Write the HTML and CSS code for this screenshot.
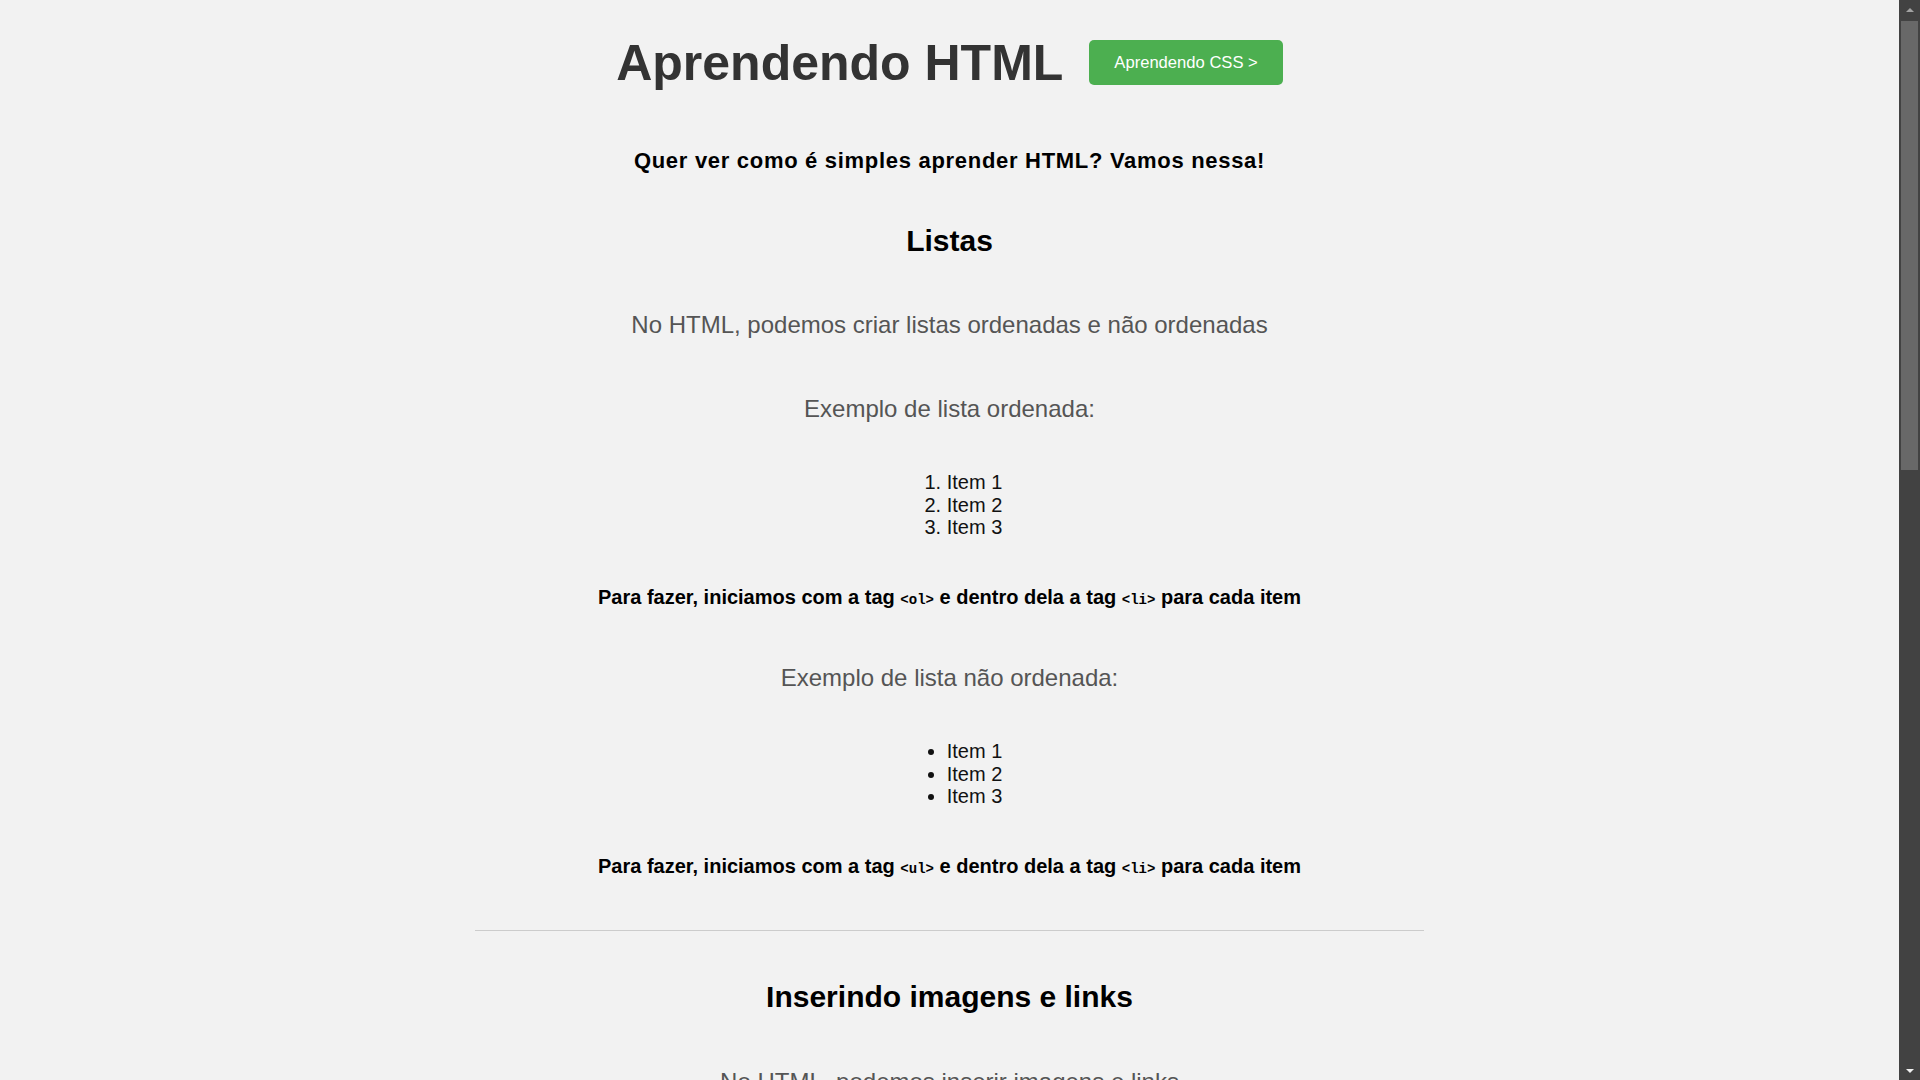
FILE: index.html
```html
<!DOCTYPE html>
<html lang="pt-BR">
<head>
<meta charset="utf-8">
<title>Aprendendo HTML</title>
<link rel="stylesheet" href="styles.css">
</head>
<body>
<header class="header">
  <h1 class="title">Aprendendo HTML</h1>
  <a class="btn" href="#">Aprendendo CSS &gt;</a>
</header>

<h3 class="subtitle">Quer ver como é simples aprender HTML? Vamos nessa!</h3>

<section class="section">
  <h2 class="section-title">Listas</h2>
  <p class="lead">No HTML, podemos criar listas ordenadas e não ordenadas</p>
  <p class="example">Exemplo de lista ordenada:</p>
  <ol class="list">
    <li>Item 1</li>
    <li>Item 2</li>
    <li>Item 3</li>
  </ol>
  <p class="note">Para fazer, iniciamos com a tag <code>&lt;ol&gt;</code> e dentro dela a tag <code>&lt;li&gt;</code> para cada item</p>
  <p class="example example-tight">Exemplo de lista não ordenada:</p>
  <ul class="list">
    <li>Item 1</li>
    <li>Item 2</li>
    <li>Item 3</li>
  </ul>
  <p class="note">Para fazer, iniciamos com a tag <code>&lt;ul&gt;</code> e dentro dela a tag <code>&lt;li&gt;</code> para cada item</p>
</section>

<hr class="divider">

<section class="section">
  <h2 class="section-title section-title-next">Inserindo imagens e links</h2>
  <p class="lead">No HTML, podemos inserir imagens e links</p>
  <p class="example">Exemplo de imagem:</p>
  <div class="figure">
    <svg width="180" height="200" viewBox="0 0 180 200" aria-label="HTML5">
      <polygon points="10,0 170,0 155,176 90,196 25,176" fill="#e44d26"/>
      <polygon points="90,14 156,14 143,164 90,180" fill="#f16529"/>
      <polygon points="46,40 134,40 131,62 70,62 72,86 129,86 122,150 90,160 58,150 56,122 78,122 79,134 90,138 101,134 103,110 50,110" fill="#fff"/>
    </svg>
  </div>
  <p class="note">Para inserir uma imagem, usamos a tag <code>&lt;img&gt;</code> com o atributo <code>src</code></p>
  <p class="example">Exemplo de link:</p>
  <p class="link-row"><a class="link" href="#">Clique aqui para aprender mais sobre HTML</a></p>
  <p class="note">Para inserir um link, usamos a tag <code>&lt;a&gt;</code> com o atributo <code>href</code></p>
</section>

<hr class="divider">

<section class="section">
  <h2 class="section-title section-title-next">Tabelas</h2>
  <p class="lead">No HTML, também podemos criar tabelas</p>
  <p class="example">Exemplo de tabela:</p>
  <table class="table">
    <tr><th>Nome</th><th>Idade</th></tr>
    <tr><td>Ana</td><td>25</td></tr>
    <tr><td>João</td><td>30</td></tr>
  </table>
  <p class="note">Para fazer, usamos as tags <code>&lt;table&gt;</code>, <code>&lt;tr&gt;</code>, <code>&lt;th&gt;</code> e <code>&lt;td&gt;</code></p>
</section>

<hr class="divider">
<footer class="footer">Aprendendo HTML</footer>

<div class="scrollbar" aria-hidden="true">
  <div class="scroll-arrow scroll-arrow-up"></div>
  <div class="scroll-track">
    <div class="scroll-thumb"></div>
  </div>
  <div class="scroll-arrow scroll-arrow-down"></div>
</div>
</body>
</html>
```

FILE: styles.css
```css
html {
  background: #f2f2f2;
}

body {
  margin: 0 21px 0 0;
  padding-bottom: 140px;
  font-family: "Liberation Sans", Arial, Helvetica, sans-serif;
  color: #000;
  text-align: center;
}

/* fake browser scrollbar (drawn over the page edge) */
.scrollbar {
  position: fixed;
  top: 0;
  right: 0;
  width: 21px;
  height: 100vh;
  background: #424242;
  display: flex;
  flex-direction: column;
}

.scroll-arrow {
  height: 17px;
  display: flex;
  justify-content: center;
  align-items: center;
  flex: none;
}

.scroll-arrow-up::before {
  content: "";
  width: 0;
  height: 0;
  border-left: 4px solid transparent;
  border-right: 4px solid transparent;
  border-bottom: 4px solid #a3a3a3;
  margin-top: 2px;
}

.scroll-arrow-down::before {
  content: "";
  width: 0;
  height: 0;
  border-left: 4px solid transparent;
  border-right: 4px solid transparent;
  border-top: 4px solid #f0f0f0;
  margin-bottom: 2px;
}

.scroll-track {
  flex: 1;
  padding: 4px 2px 0;
}

.scroll-thumb {
  height: 449px;
  background: #686868;
}

.header {
  display: flex;
  justify-content: center;
  align-items: flex-start;
  gap: 26px;
  padding-top: 34px;
}

.title {
  margin: 0;
  font-size: 50px;
  font-weight: 700;
  color: #333;
  line-height: normal;
}

.btn {
  display: block;
  height: 45px;
  margin-top: 6px;
  padding: 0 25px;
  background: #4caf50;
  color: #fff;
  font-size: 16.6px;
  line-height: 45px;
  text-decoration: none;
  border-radius: 5px;
}

.subtitle {
  margin: 56px 0 0;
  font-size: 22px;
  font-weight: 700;
  letter-spacing: 0.7px;
  line-height: normal;
}

.section-title {
  margin: 50px 0 0;
  font-size: 30px;
  font-weight: 700;
  line-height: normal;
}

.section-title-next {
  margin-top: 49.7px;
}

.lead {
  margin: 53.3px 0 0;
  font-size: 24px;
  color: #555;
  line-height: normal;
}

.example {
  margin: 55.6px 0 0;
  font-size: 24px;
  color: #555;
  line-height: normal;
}

.example-tight {
  margin-top: 54.6px;
}

.list {
  width: fit-content;
  margin: 48.5px auto 0;
  padding-left: 50px;
  text-align: left;
  font-size: 20px;
  line-height: 22.35px;
  color: #111;
}

.note {
  margin: 47.8px 0 0;
  font-size: 20px;
  font-weight: 700;
  line-height: normal;
}

.note code {
  font-family: "Liberation Mono", "Courier New", monospace;
  font-size: 14px;
  font-weight: 700;
}

.divider {
  width: 50%;
  height: 0;
  margin: 51.5px auto 0;
  border: 0;
  border-top: 1px solid #ccc;
}

.figure {
  margin-top: 48px;
  display: flex;
  justify-content: center;
}

.link-row {
  margin: 48px 0 0;
  font-size: 20px;
}

.link {
  color: #4caf50;
}

.table {
  margin: 48px auto 0;
  border-collapse: collapse;
  font-size: 20px;
  color: #111;
}

.table th,
.table td {
  padding: 6px 24px;
  border: 1px solid #ccc;
}

.table th {
  background: #4caf50;
  color: #fff;
}

.footer {
  margin-top: 40px;
  font-size: 16px;
  color: #555;
}
```
